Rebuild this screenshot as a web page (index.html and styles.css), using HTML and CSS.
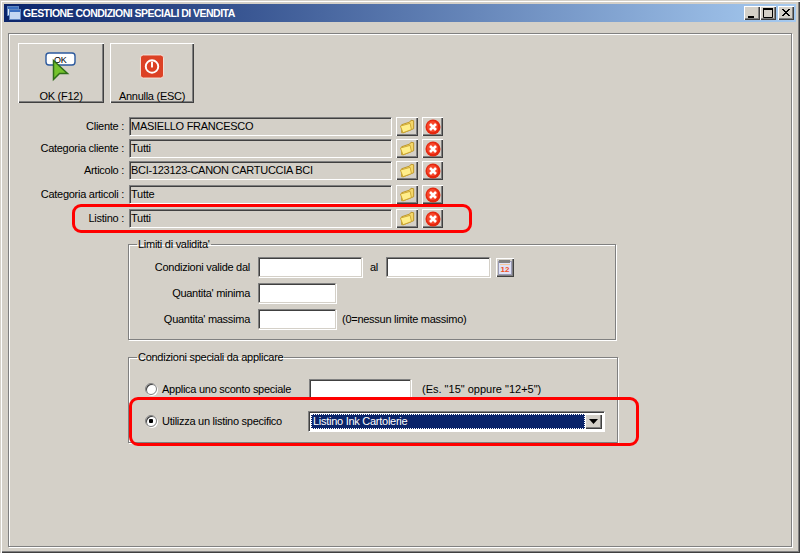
FILE: index.html
```html
<!DOCTYPE html>
<html lang="it">
<head>
<meta charset="utf-8">
<title>Gestione condizioni speciali di vendita</title>
<link rel="stylesheet" href="styles.css">
</head>
<body>
<div class="window">
  <div class="titlebar">
    <svg class="title-icon" width="14" height="14" viewBox="0 0 14 14"><rect x="0.5" y="0.5" width="11" height="9" fill="#dfe9f7" stroke="#5f86c0"/><rect x="1" y="1" width="10" height="2" fill="#3a6fc0"/><rect x="2.5" y="3.5" width="11" height="10" fill="#c4d8f2" stroke="#5f86c0"/><rect x="3" y="4" width="10" height="2" fill="#3a6fc0"/></svg>
    <span class="title-text">GESTIONE CONDIZIONI SPECIALI DI VENDITA</span>
    <div class="title-buttons">
      <span class="cap"><svg width="16" height="14" viewBox="0 0 16 14"><rect x="4" y="10" width="6" height="2" fill="#000"/></svg></span>
      <span class="cap"><svg width="16" height="14" viewBox="0 0 16 14"><path d="M3.5 3.5h9v8h-9z" fill="none" stroke="#000"/><rect x="3" y="2" width="10" height="2" fill="#000"/></svg></span>
      <span class="cap cap-close"><svg width="16" height="14" viewBox="0 0 16 14"><path d="M4 3l7 7M5 3l7 7M11 3l-7 7M12 3l-7 7" stroke="#000" fill="none"/></svg></span>
    </div>
  </div>

  <div class="panel">
    <div class="toolbar">
      <button class="tool tool-ok" type="button">
        <svg class="tool-icon" width="32" height="30" viewBox="0 0 32 30">
          <rect x="1" y="1" width="29" height="12" rx="3" fill="#fff" stroke="#2d5a9e" stroke-width="1.4"/>
          <text x="9" y="10.5" class="ok-mini">OK</text>
          <path d="M8.500 8.500L22.500 21.500l-8 0-6 6z" fill="#74c22c" stroke="#2f6e18" stroke-width="1.500"/>
        </svg>
        <span>OK (F12)</span>
      </button>
      <button class="tool tool-cancel" type="button">
        <svg class="tool-icon" width="26" height="26" viewBox="0 0 26 26">
          <rect x="1" y="1" width="24" height="24" rx="3" fill="#dc4125" stroke="#f6e4dc"/>
          <circle cx="13" cy="13" r="6.500" fill="none" stroke="#fff" stroke-width="2"/>
          <rect x="12" y="8" width="2" height="6" fill="#fff"/>
        </svg>
        <span>Annulla (ESC)</span>
      </button>
    </div>

    <div class="fields">
      <div class="row">
        <span class="row-label">Cliente :</span>
        <div class="field">MASIELLO FRANCESCO</div>
        <button class="mini" type="button"><svg class="i-folder" width="18" height="16" viewBox="0 0 18 16"><path d="M3 6l9-3 1.500-2 3 .5v9L5 15H3z" fill="#f5d76a" stroke="#b8901e"/><path d="M1.500 7.500l11-3 1.500 7-9.500 3.500z" fill="#ffee8a" stroke="#c9a22e"/></svg></button>
        <button class="mini mini-x" type="button"><svg class="i-del" width="16" height="16" viewBox="0 0 16 16"><circle cx="8" cy="8" r="7.500" fill="#e5280f"/><circle cx="7.500" cy="7.500" r="5.500" fill="#f8482c"/><path d="M5 5l6 6M11 5l-6 6" stroke="#fff" stroke-width="2.600"/></svg></button>
      </div>
      <div class="row">
        <span class="row-label">Categoria cliente :</span>
        <div class="field">Tutti</div>
        <button class="mini" type="button"><svg class="i-folder" width="18" height="16" viewBox="0 0 18 16"><path d="M3 6l9-3 1.500-2 3 .5v9L5 15H3z" fill="#f5d76a" stroke="#b8901e"/><path d="M1.500 7.500l11-3 1.500 7-9.500 3.500z" fill="#ffee8a" stroke="#c9a22e"/></svg></button>
        <button class="mini mini-x" type="button"><svg class="i-del" width="16" height="16" viewBox="0 0 16 16"><circle cx="8" cy="8" r="7.500" fill="#e5280f"/><circle cx="7.500" cy="7.500" r="5.500" fill="#f8482c"/><path d="M5 5l6 6M11 5l-6 6" stroke="#fff" stroke-width="2.600"/></svg></button>
      </div>
      <div class="row">
        <span class="row-label">Articolo :</span>
        <div class="field">BCI-123123-CANON CARTUCCIA BCI</div>
        <button class="mini" type="button"><svg class="i-folder" width="18" height="16" viewBox="0 0 18 16"><path d="M3 6l9-3 1.500-2 3 .5v9L5 15H3z" fill="#f5d76a" stroke="#b8901e"/><path d="M1.500 7.500l11-3 1.500 7-9.500 3.500z" fill="#ffee8a" stroke="#c9a22e"/></svg></button>
        <button class="mini mini-x" type="button"><svg class="i-del" width="16" height="16" viewBox="0 0 16 16"><circle cx="8" cy="8" r="7.500" fill="#e5280f"/><circle cx="7.500" cy="7.500" r="5.500" fill="#f8482c"/><path d="M5 5l6 6M11 5l-6 6" stroke="#fff" stroke-width="2.600"/></svg></button>
      </div>
      <div class="row row-wide">
        <span class="row-label">Categoria articoli :</span>
        <div class="field">Tutte</div>
        <button class="mini" type="button"><svg class="i-folder" width="18" height="16" viewBox="0 0 18 16"><path d="M3 6l9-3 1.500-2 3 .5v9L5 15H3z" fill="#f5d76a" stroke="#b8901e"/><path d="M1.500 7.500l11-3 1.500 7-9.500 3.500z" fill="#ffee8a" stroke="#c9a22e"/></svg></button>
        <button class="mini mini-x" type="button"><svg class="i-del" width="16" height="16" viewBox="0 0 16 16"><circle cx="8" cy="8" r="7.500" fill="#e5280f"/><circle cx="7.500" cy="7.500" r="5.500" fill="#f8482c"/><path d="M5 5l6 6M11 5l-6 6" stroke="#fff" stroke-width="2.600"/></svg></button>
      </div>
      <div class="row row-wide">
        <span class="row-label">Listino :</span>
        <div class="field">Tutti</div>
        <button class="mini" type="button"><svg class="i-folder" width="18" height="16" viewBox="0 0 18 16"><path d="M3 6l9-3 1.500-2 3 .5v9L5 15H3z" fill="#f5d76a" stroke="#b8901e"/><path d="M1.500 7.500l11-3 1.500 7-9.500 3.500z" fill="#ffee8a" stroke="#c9a22e"/></svg></button>
        <button class="mini mini-x" type="button"><svg class="i-del" width="16" height="16" viewBox="0 0 16 16"><circle cx="8" cy="8" r="7.500" fill="#e5280f"/><circle cx="7.500" cy="7.500" r="5.500" fill="#f8482c"/><path d="M5 5l6 6M11 5l-6 6" stroke="#fff" stroke-width="2.600"/></svg></button>
      </div>
    </div>

    <fieldset class="group group-limits">
      <legend>Limiti di validita'</legend>
      <div class="g-row">
        <label class="g-label">Condizioni valide dal</label>
        <input class="entry entry-date" type="text">
        <span class="al">al</span>
        <input class="entry entry-date" type="text">
        <button class="cal" type="button">
          <svg width="16" height="17" viewBox="0 0 16 17"><rect x="1.500" y="2.500" width="13" height="13" fill="#dfe2f6" stroke="#9a9ab4"/><rect x="2" y="1" width="11" height="3" fill="#7f7f7f"/><rect x="3" y="5" width="10" height="1" fill="#f6c8a0"/><text x="3.500" y="12.500" class="cal-num">12</text></svg>
        </button>
      </div>
      <div class="g-row">
        <label class="g-label">Quantita' minima</label>
        <input class="entry entry-qty" type="text">
      </div>
      <div class="g-row">
        <label class="g-label">Quantita' massima</label>
        <input class="entry entry-qty" type="text">
        <span class="hint-qty">(0=nessun limite massimo)</span>
      </div>
    </fieldset>

    <fieldset class="group group-special">
      <legend>Condizioni speciali da applicare</legend>
      <div class="s-row">
        <span class="radio"></span>
        <span class="s-label">Applica uno sconto speciale</span>
        <input class="entry entry-disc" type="text">
        <span class="hint-disc">(Es. "15" oppure "12+5")</span>
      </div>
      <div class="s-row s-row-second">
        <span class="radio radio-on"></span>
        <span class="s-label">Utilizza un listino specifico</span>
        <div class="combo">
          <span class="combo-value">Listino Ink Cartolerie</span>
          <span class="combo-btn"><svg width="9" height="5" viewBox="0 0 9 5"><path d="M0 0h9L4.500 5z" fill="#000"/></svg></span>
        </div>
      </div>
    </fieldset>
  </div>

  <div class="mark mark-listino"></div>
  <div class="mark mark-special"></div>
</div>
</body>
</html>
```

FILE: styles.css
```css
* { box-sizing: border-box; }
html, body { margin: 0; padding: 0; }
body {
  width: 800px;
  height: 553px;
  overflow: hidden;
  background: #d4d0c8;
  font-family: "Liberation Sans", Arial, sans-serif;
  font-size: 11px;
  letter-spacing: -0.27px;
  color: #000;
}
.window {
  position: relative;
  width: 800px;
  height: 553px;
  padding: 4px;
  background: #d4d0c8;
  box-shadow: inset 1px 1px #d4d0c8, inset 2px 2px #fff, inset -1px -1px #404040, inset -2px -2px #808080;
}
.titlebar {
  display: flex;
  align-items: center;
  height: 18px;
  padding-left: 3px;
  background: linear-gradient(90deg, #0a246a, #a6caf0);
}
.title-icon { flex: none; }
.title-text {
  margin-left: 2px;
  font-weight: 700;
  font-size: 10.5px;
  letter-spacing: -0.52px;
  color: #fff;
  white-space: nowrap;
}
.title-buttons {
  display: flex;
  margin-left: auto;
  margin-right: 2px;
}
.cap {
  display: flex;
  width: 16px;
  height: 14px;
  background: #d4d0c8;
  box-shadow: inset 1px 1px #fff, inset -1px -1px #404040, inset -2px -2px #808080;
}
.cap-close { margin-left: 2px; }
.panel {
  width: 784px;
  height: 514px;
  margin-top: 11px;
  margin-left: 4px;
  padding: 8px 0 0;
  border: 1px solid #808080;
  box-shadow: inset 1px 1px #fff, 1px 1px #fff;
}
.toolbar {
  display: flex;
  gap: 6px;
  margin-left: 9px;
  margin-top: 1px;
}
.tool {
  display: flex;
  flex-direction: column;
  align-items: center;
  height: 60px;
  padding: 0;
  border: 0;
  background: #d4d0c8;
  font: inherit;
  letter-spacing: inherit;
  color: #000;
  box-shadow: inset 1px 1px #fff, inset -1px -1px #404040, inset -2px -2px #808080;
}
.tool span { line-height: 14px; }
.tool-ok { width: 86px; padding-top: 9px; }
.tool-ok span { margin-top: 7px; }
.tool-cancel { width: 84px; padding-top: 11px; }
.tool-cancel span { margin-top: 10px; }
.ok-mini { font-size: 9px; font-family: "Liberation Sans", Arial, sans-serif; fill: #000; }
.fields {
  display: flex;
  flex-direction: column;
  gap: 3px;
  margin-top: 14px;
}
.row {
  display: flex;
  align-items: flex-start;
  height: 19px;
}
.row-wide { margin-top: 2px; }
.row-label {
  width: 115px;
  margin-right: 5px;
  text-align: right;
  line-height: 18px;
  white-space: nowrap;
}
.field {
  width: 263px;
  height: 19px;
  margin-right: 4px;
  padding-left: 1px;
  line-height: 17px;
  border: 1px solid;
  border-color: #808080 #fff #fff #808080;
  box-shadow: inset 1px 1px #404040;
  white-space: nowrap;
}
.mini {
  display: flex;
  align-items: center;
  justify-content: center;
  width: 22px;
  height: 19px;
  margin-right: 4px;
  padding: 0;
  border: 0;
  background: #d4d0c8;
  box-shadow: inset 1px 1px #fff, inset -1px -1px #404040, inset -2px -2px #808080;
}
.mini-x { width: 21px; }
.i-folder { width: 16px; height: 15px; }
.group {
  margin: 0;
  padding: 0;
  border: 1px solid #808080;
  box-shadow: inset 1px 1px #fff, 1px 1px #fff;
}
.group legend {
  margin-left: 8px;
  padding: 0 1px;
  line-height: 14px;
}
.group-limits {
  width: 488px;
  margin: 9px 0 0 119px;
  padding: 6px 0 10px;
}
.g-row {
  display: flex;
  align-items: center;
  height: 20px;
  margin-bottom: 6px;
}
.g-row:last-child { margin-bottom: 0; }
.g-label {
  width: 121px;
  margin-right: 8px;
  text-align: right;
  white-space: nowrap;
}
.entry {
  height: 20px;
  margin: 0;
  padding: 0;
  border: 1px solid;
  border-color: #808080 #d4d0c8 #d4d0c8 #808080;
  border-radius: 0;
  background: #fff;
  outline: 0;
  box-shadow: inset 1px 1px #404040, 1px 1px #fff;
}
.entry-date { width: 104px; }
.entry-qty { width: 78px; }
.al { width: 24px; text-align: center; }
.cal {
  display: flex;
  align-items: center;
  justify-content: center;
  width: 18px;
  height: 19px;
  margin-left: 6px;
  padding: 0;
  border: 0;
  background: #d4d0c8;
  box-shadow: inset 1px 1px #fff, inset -1px -1px #404040, inset -2px -2px #808080;
}
.cal-num { font-size: 8px; font-weight: 700; letter-spacing: 0; fill: #f0501e; font-family: "Liberation Sans", Arial, sans-serif; }
.hint-qty { margin-left: 6px; white-space: nowrap; }
.group-special {
  width: 490px;
  margin: 10px 0 0 119px;
  padding: 15px 0 11px;
}
.s-row {
  display: flex;
  align-items: center;
  height: 20px;
  padding-left: 16px;
}
.s-row-second { margin-top: 12px; }
.radio {
  flex: none;
  width: 12px;
  height: 12px;
  border-radius: 50%;
  background: #fff;
  border: 1px solid #808080;
  box-shadow: inset 1px 1px #404040, 1px 1px #fff;
}
.radio-on {
  background: radial-gradient(circle at 50% 50%, #000 0 2px, #fff 2.500px);
}
.s-label {
  width: 147px;
  margin-left: 5px;
  white-space: nowrap;
}
.entry-disc { width: 102px; }
.hint-disc { margin-left: 11px; letter-spacing: 0; white-space: nowrap; }
.combo {
  display: flex;
  align-items: center;
  width: 297px;
  height: 21px;
  margin-left: -1px;
  padding: 2px;
  border: 1px solid;
  border-color: #808080 #fff #fff #808080;
  box-shadow: inset 1px 1px #404040;
  background: #fff;
}
.combo-value {
  flex: 1;
  height: 100%;
  padding-left: 2px;
  line-height: 15px;
  color: #fff;
  background: #0a246a;
  outline: 1px dotted #fff;
  outline-offset: -1px;
  white-space: nowrap;
}
.combo-btn {
  display: flex;
  align-items: center;
  justify-content: center;
  flex: none;
  width: 17px;
  height: 100%;
  background: #d4d0c8;
  box-shadow: inset 1px 1px #fff, inset -1px -1px #404040, inset -2px -2px #808080;
}
.mark {
  position: absolute;
  border: 3px solid #ff0000;
  border-radius: 9px;
  pointer-events: none;
}
.mark-listino { left: 72px; top: 204px; width: 400px; height: 29px; }
.mark-special { left: 129px; top: 397px; width: 510px; height: 49px; }
```
